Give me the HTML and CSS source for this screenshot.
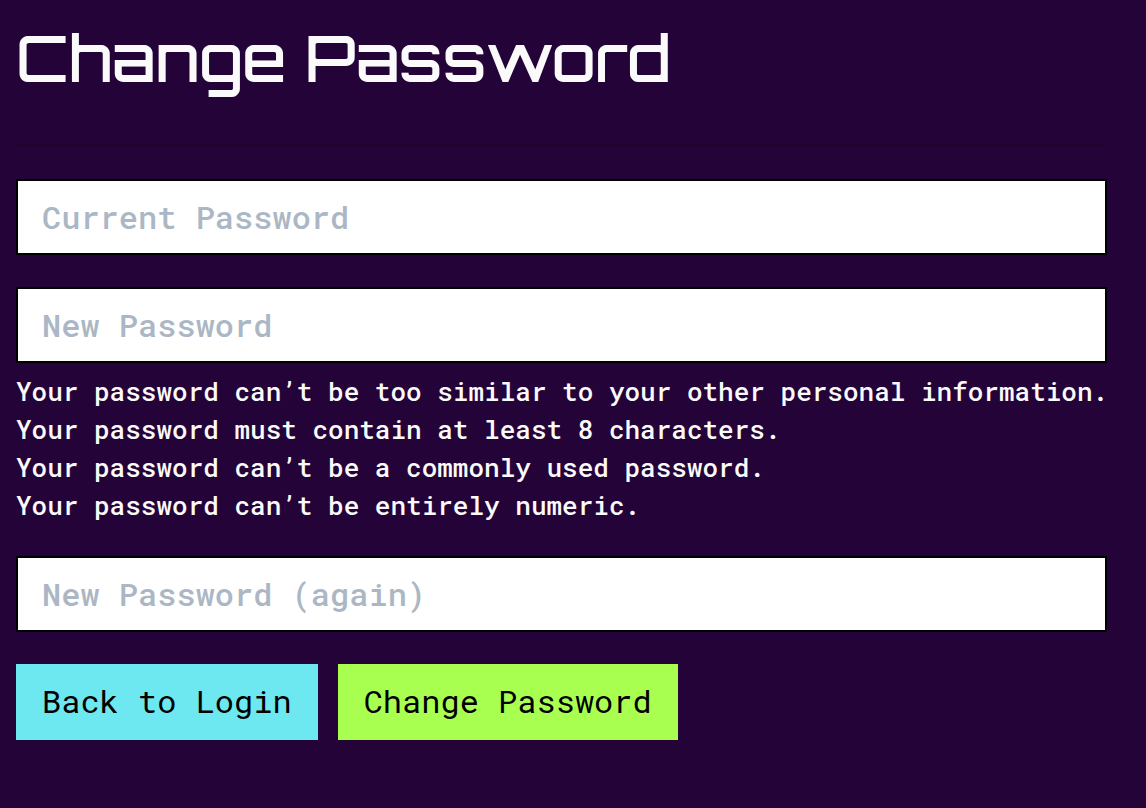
FILE: index.html
```html
<!DOCTYPE html>
<html lang="en">
<head>
<meta charset="utf-8">
<title>Change Password</title>
<link rel="stylesheet" href="styles.css">
</head>
<body>
<main class="page">
  <h1 class="title">Change Password</h1>
  <hr class="rule">
  <form class="form">
    <input class="field" type="password" placeholder="Current Password" aria-label="Current Password">
    <div class="group">
      <input class="field" type="password" placeholder="New Password" aria-label="New Password" aria-describedby="hints">
      <ul class="hints" id="hints">
        <li>Your password can’t be too similar to your other personal information.</li>
        <li>Your password must contain at least 8 characters.</li>
        <li>Your password can’t be a commonly used password.</li>
        <li>Your password can’t be entirely numeric.</li>
      </ul>
    </div>
    <input class="field" type="password" placeholder="New Password (again)" aria-label="New Password (again)">
    <div class="actions">
      <a class="button back" href="#">Back to Login</a>
      <button class="button submit" type="submit">Change Password</button>
    </div>
  </form>
</main>
</body>
</html>
```
FILE: styles.css
```css
* { box-sizing: border-box; }
body {
  margin: 0;
  background: #240339;
  color: #fafafa;
  font-family: "Roboto Mono", "DejaVu Sans Mono", "Liberation Mono", monospace;
}
.page { padding: 16px 39px 68px 16px; }
.title {
  margin: 0;
  font: 500 64px/84px Orbitron, Inter, sans-serif;
}
.rule {
  height: 2px;
  margin: 44px 0 33px;
  border: 0;
  background: #21032e;
}
.form { display: flex; flex-direction: column; gap: 32px; }
.field {
  width: 100%;
  height: 76px;
  padding: 0 24px 2px;
  border: 2px solid #000;
  border-radius: 0;
  background: #fff;
  color: #000;
  font: 500 32px/48px "Roboto Mono", "Liberation Mono", monospace;
}
.field::placeholder { color: #abb7c4; opacity: 1; }
.hints {
  margin: 9px 0 0;
  padding: 0;
  list-style: none;
  font: 500 26px/38px "Roboto Mono", "Liberation Mono", monospace;
  white-space: nowrap;
}
.actions { display: flex; flex-wrap: wrap; gap: 20px; }
.button {
  height: 76px;
  padding: 0 26px 2px;
  border: 0;
  color: #000;
  font: 32px/74px "Roboto Mono", "Liberation Mono", monospace;
  text-decoration: none;
}
.back { background: #6de8f1; }
.submit { background: #a8ff4f; }
```
